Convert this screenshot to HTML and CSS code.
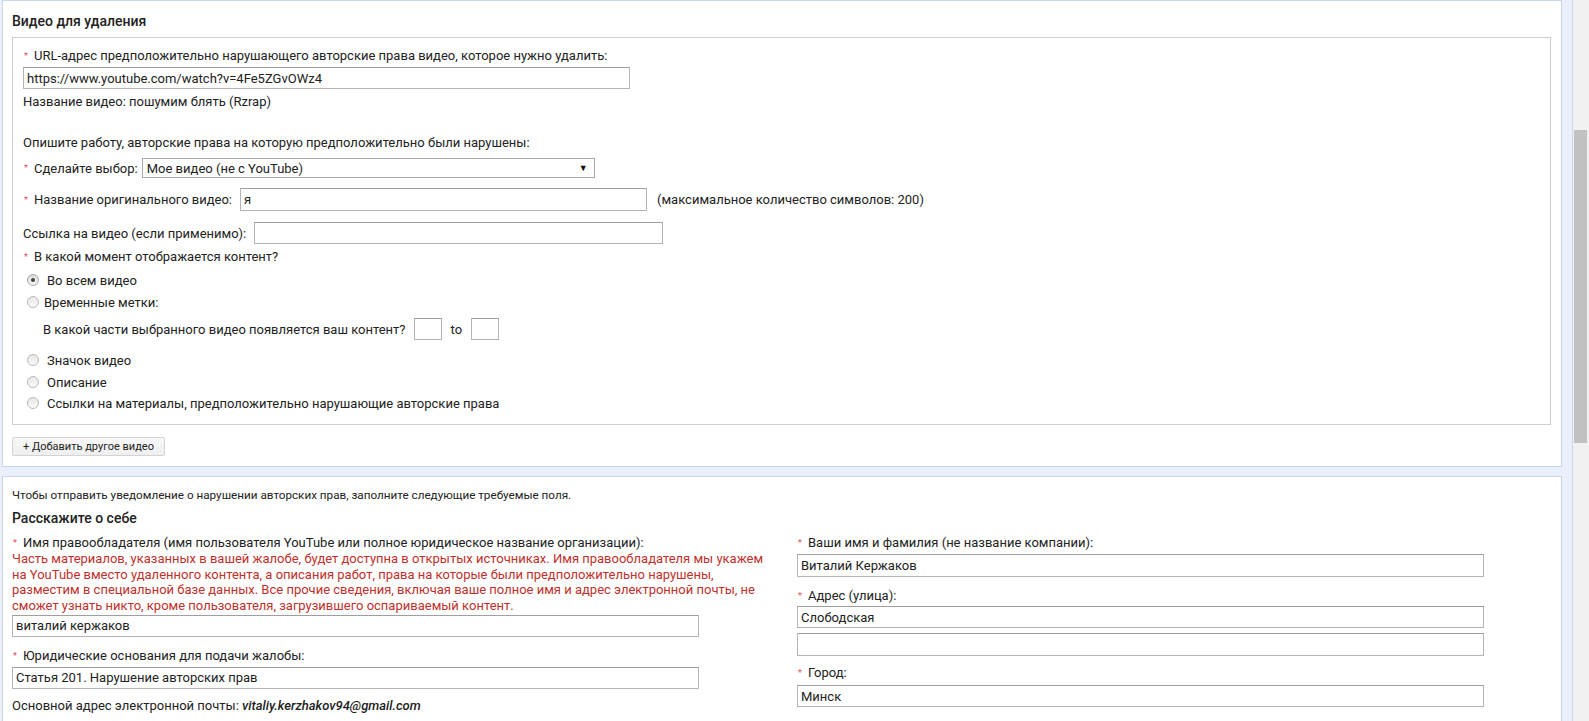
FILE: index.html
```html
<!DOCTYPE html>
<html lang="ru">
<head>
<meta charset="utf-8">
<title>Видео для удаления</title>
<link rel="stylesheet" href="styles.css">
</head>
<body>
<div class="screen">
  <div class="page">
    <section class="panel panel-video">
      <h2 class="heading">Видео для удаления</h2>
      <div class="video-box">
        <div class="line"><span class="req">*</span>URL-адрес предположительно нарушающего авторские права видео, которое нужно удалить:</div>
        <input class="field field-url" type="text" value="https://www.youtube.com/watch?v=4Fe5ZGvOWz4">
        <div class="line note">Название видео: пошумим блять (Rzrap)</div>
        <div class="line describe">Опишите работу, авторские права на которую предположительно были нарушены:</div>
        <div class="row row-select"><span class="req">*</span><span class="inline-label">Сделайте выбор:</span><div class="select"><span>Мое видео (не с YouTube)</span><span class="arrow">▼</span></div></div>
        <div class="row row-orig"><span class="req">*</span><span class="inline-label">Название оригинального видео:</span><input class="field field-orig" type="text" value="я"><span class="hint">(максимальное количество символов: 200)</span></div>
        <div class="row row-link"><span class="inline-label">Ссылка на видео (если применимо):</span><input class="field field-link" type="text" value=""></div>
        <div class="line when"><span class="req">*</span>В какой момент отображается контент?</div>
        <div class="radio-row r1"><span class="radio checked"><span class="dot"></span></span><span class="rlabel">Во всем видео</span></div>
        <div class="radio-row r2"><span class="radio"></span><span class="rlabel rlabel-tight">Временные метки:</span></div>
        <div class="row row-time"><span class="inline-label">В какой части выбранного видео появляется ваш контент?</span><input class="field field-time" type="text" value=""><span class="to">to</span><input class="field field-time" type="text" value=""></div>
        <div class="radio-row r3"><span class="radio"></span><span class="rlabel">Значок видео</span></div>
        <div class="radio-row r4"><span class="radio"></span><span class="rlabel">Описание</span></div>
        <div class="radio-row r5"><span class="radio"></span><span class="rlabel">Ссылки на материалы, предположительно нарушающие авторские права</span></div>
      </div>
      <button class="btn" type="button">+ Добавить другое видео</button>
    </section>

    <section class="panel panel-about">
      <div class="intro">Чтобы отправить уведомление о нарушении авторских прав, заполните следующие требуемые поля.</div>
      <h2 class="heading heading-about">Расскажите о себе</h2>
      <div class="columns">
        <div class="col col-left">
          <div class="line"><span class="req">*</span>Имя правообладателя (имя пользователя YouTube или полное юридическое название организации):</div>
          <div class="warning">Часть материалов, указанных в вашей жалобе, будет доступна в открытых источниках. Имя правообладателя мы укажем на YouTube вместо удаленного контента, а описания работ, права на которые были предположительно нарушены, разместим в специальной базе данных. Все прочие сведения, включая ваше полное имя и адрес электронной почты, не сможет узнать никто, кроме пользователя, загрузившего оспариваемый контент.</div>
          <input class="field field-wide owner" type="text" value="виталий кержаков">
          <div class="line legal-label"><span class="req">*</span>Юридические основания для подачи жалобы:</div>
          <input class="field field-wide legal" type="text" value="Статья 201. Нарушение авторских прав">
          <div class="line email">Основной адрес электронной почты: <span class="email-value">vitaliy.kerzhakov94@gmail.com</span></div>
        </div>
        <div class="col col-right">
          <div class="line"><span class="req">*</span>Ваши имя и фамилия (не название компании):</div>
          <input class="field field-wide name" type="text" value="Виталий Кержаков">
          <div class="line addr-label"><span class="req">*</span>Адрес (улица):</div>
          <input class="field field-wide addr1" type="text" value="Слободская">
          <input class="field field-wide addr2" type="text" value="">
          <div class="line city-label"><span class="req">*</span>Город:</div>
          <input class="field field-wide city" type="text" value="Минск">
        </div>
      </div>
    </section>
  </div>
  <div class="scrollbar"><div class="thumb"></div></div>
</div>
</body>
</html>
```

FILE: styles.css
```css
* { box-sizing: border-box; }

html, body {
  margin: 0;
  padding: 0;
  height: 100%;
  overflow: hidden;
}

body {
  font-family: Roboto, "Noto Sans", "Liberation Sans", sans-serif;
  font-size: 13px;
  color: #222;
  background: #f1f1f1;
}

.screen {
  display: flex;
  height: 721px;
  overflow: hidden;
}

.page {
  flex: none;
  width: 1573px;
  background: #e9f0fb;
  border-right: 1px solid #c9d5ea;
  padding: 0 10px 0 2px;
}

.scrollbar {
  flex: 1;
  background: #f1f1f1;
  padding: 130px 2px 0 1px;
}

.thumb {
  height: 313px;
  background: #c1c1c1;
}

.panel {
  background: #fff;
  border: 1px solid #c9d5ea;
}

.panel-video {
  padding: 11px 10px 10px 9px;
}

.heading {
  margin: 0;
  font-size: 14px;
  font-weight: 500;
  line-height: 18px;
  color: #222;
}

.video-box {
  margin-top: 7px;
  border: 1px solid #cfcfcf;
  padding: 10px 10px 13px 10px;
}

.line {
  height: 16px;
  line-height: 16px;
  white-space: nowrap;
}

.req {
  display: inline-block;
  width: 11px;
  height: 16px;
  padding-left: 1px;
  color: #e0525a;
  font-size: 9px;
  line-height: 17px;
  vertical-align: top;
}

.field {
  display: block;
  height: 22px;
  margin: 0;
  padding: 0 3px;
  border: 1px solid #b4b4b4;
  border-top-color: #9f9f9f;
  border-radius: 0;
  background: #fff;
  font-family: Roboto, "Noto Sans", "Liberation Sans", sans-serif;
  font-size: 13px;
  color: #222;
  outline: none;
}

.field-url {
  margin-top: 3px;
  width: 607px;
}

.note { margin-top: 5px; }
.describe { margin-top: 25px; }

.row {
  display: flex;
  align-items: center;
  white-space: nowrap;
}

.row .req { height: 14px; line-height: 15px; }

.inline-label { margin-right: 4px; }

.row-select { margin-top: 7px; }

.select {
  display: flex;
  justify-content: space-between;
  align-items: center;
  width: 453px;
  height: 20px;
  padding: 0 6px 0 4px;
  border: 1px solid #a9a9a9;
  background: #fff;
}

.arrow {
  font-size: 9px;
  color: #111;
}

.row-orig { margin-top: 10px; }

.row-orig .inline-label { margin-right: 8px; }

.field-orig {
  width: 407px;
  height: 23px;
}

.hint { margin-left: 10px; }

.row-link { margin-top: 11px; }

.row-link .inline-label { margin-right: 8px; }

.field-link { width: 409px; }

.when { margin-top: 5px; }

.radio-row {
  display: flex;
  align-items: center;
  height: 16px;
  white-space: nowrap;
}

.radio {
  flex: none;
  display: grid;
  place-items: center;
  width: 12px;
  height: 12px;
  margin-left: 4px;
  border: 1px solid #b9b9b9;
  border-radius: 50%;
  background: linear-gradient(#e6e6e6, #fbfbfb);
}

.radio.checked {
  border-color: #a8a8a8;
  background: linear-gradient(#dcdcdc, #f4f4f4);
}

.dot {
  width: 4px;
  height: 4px;
  border-radius: 50%;
  background: #444;
}

.rlabel { margin-left: 8px; }
.rlabel-tight { margin-left: 5px; }

.r1 { margin-top: 7px; }
.r2 { margin-top: 6px; }

.row-time {
  margin-top: 8px;
  padding-left: 20px;
}

.row-time .inline-label { margin-right: 8px; }

.field-time {
  width: 28px;
  height: 22px;
}

.to {
  margin: 0 9px 0 9px;
}

.r3 { margin-top: 12px; }
.r4 { margin-top: 6px; }
.r5 { margin-top: 5px; }

.btn {
  display: block;
  margin-top: 12px;
  height: 19px;
  padding: 0 10px;
  border: 1px solid #d3d3d3;
  border-radius: 2px;
  background: linear-gradient(#f8f8f8, #efefef);
  font-family: Roboto, "Noto Sans", "Liberation Sans", sans-serif;
  font-size: 11px;
  color: #222;
  line-height: 17px;
}

.panel-about {
  margin-top: 9px;
  padding: 10px 10px 0 9px;
  height: 260px;
}

.intro {
  font-size: 11.7px;
  line-height: 16px;
  white-space: nowrap;
}

.heading-about {
  margin-top: 6px;
}

.columns {
  display: grid;
  grid-template-columns: 765px 1fr;
  column-gap: 20px;
  margin-top: 8px;
}

.warning {
  color: #c0302b;
  line-height: 15.67px;
}

.field-wide {
  width: 687px;
}

.owner { margin-top: 1px; }
.legal-label { margin-top: 11px; }
.legal { margin-top: 3px; }
.email { margin-top: 9px; }

.email-value {
  font-style: italic;
  font-weight: 500;
}

.name { margin-top: 3px; height: 23px; }
.addr-label { margin-top: 11px; }
.addr1 { margin-top: 2px; }
.addr2 { margin-top: 5px; height: 23px; }
.city-label { margin-top: 9px; }
.city { margin-top: 4px; }
```
